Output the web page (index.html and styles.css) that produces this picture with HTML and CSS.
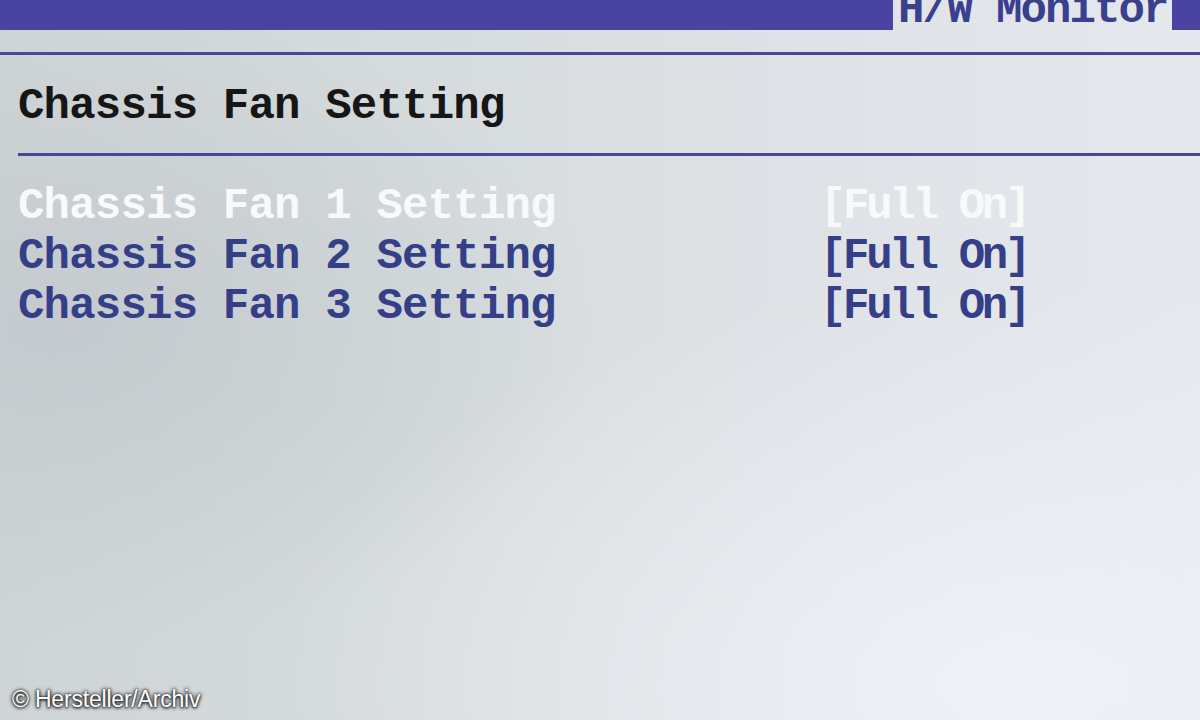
FILE: index.html
```html
<!DOCTYPE html>
<html lang="en">
<head>
    <meta charset="UTF-8">
    <title>Chassis Fan Setting</title>
    <link rel="stylesheet" href="styles.css">
</head>
<body>
    <!-- Barra superior com a aba ativa -->
    <div class="topo">
        <div class="topo-azul"></div>
        <div class="aba"><span>H/W Monitor</span></div>
        <div class="topo-fim"></div>
    </div>
    <div class="linha"></div>

    <div class="titulo">Chassis Fan Setting</div>
    <div class="linha linha-recuo"></div>

    <!-- Opções dos ventiladores -->
    <div class="opcoes">
        <div class="opcao ativa">
            <span class="nome">Chassis Fan 1 Setting</span>
            <span class="valor">[Full On]</span>
        </div>
        <div class="opcao">
            <span class="nome">Chassis Fan 2 Setting</span>
            <span class="valor">[Full On]</span>
        </div>
        <div class="opcao">
            <span class="nome">Chassis Fan 3 Setting</span>
            <span class="valor">[Full On]</span>
        </div>
    </div>

    <div class="creditos">&copy; Hersteller/Archiv</div>
</body>
</html>
```

FILE: styles.css
```css
body {
    margin: 0;
    width: 1200px;
    height: 720px;
    overflow: hidden;
    position: relative;
    font-family: "Liberation Mono", "DejaVu Sans Mono", monospace;
    font-weight: bold;
    font-size: 44px;
    line-height: 50px;
    letter-spacing: -0.8px;
    background:
        radial-gradient(ellipse 45% 45% at 5% 45%, #c4cacd 0%, rgba(196,202,205,0) 100%),
        radial-gradient(ellipse 90% 80% at 85% 95%, #eef1f5 0%, rgba(238,241,245,0) 70%),
        linear-gradient(90deg, #cfd4d7 0%, #d6dbde 35%, #dfe3e7 70%, #e5e9ed 100%);
}
.topo {
    display: flex;
    height: 30px;
}
.topo-azul {
    flex: 1;
    background: #4944a2;
}
.aba {
    width: 279px;
    overflow: hidden;
    padding-left: 5px;
    box-sizing: border-box;
    color: #3a3f8e;
    letter-spacing: -1.9px;
}
.aba span {
    display: block;
    margin-top: -15px;
}
.topo-fim {
    width: 28px;
    background: #4944a2;
}
.linha {
    height: 3px;
    margin-top: 22px;
    background: #47479a;
}
.linha-recuo {
    margin-left: 18px;
}
.titulo {
    margin-top: 26px;
    padding-left: 18px;
    color: #161616;
}
.opcoes {
    margin-top: 25px;
    padding-left: 18px;
}
.opcao {
    display: grid;
    grid-template-columns: 802px auto;
    color: #353f88;
}
.opcao.ativa {
    color: #f8f9fa;
}
.valor {
    letter-spacing: -3.3px;
}
/* marca d'água do crédito da foto */
.creditos {
    position: absolute;
    left: 12px;
    bottom: 9px;
    font-family: "Liberation Sans", Arial, sans-serif;
    font-weight: normal;
    font-size: 23px;
    line-height: 24px;
    letter-spacing: -0.2px;
    color: #fff;
    text-shadow: 0 0 4px #111, 0 0 2px #333, 0 1px 3px #222;
}
```
